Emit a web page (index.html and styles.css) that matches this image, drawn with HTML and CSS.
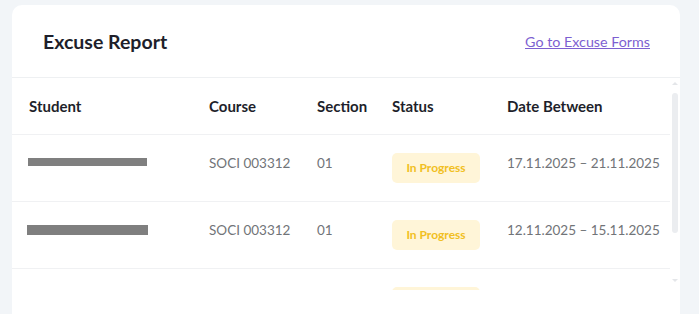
FILE: index.html
```html
<!DOCTYPE html>
<html lang="en">
<head>
  <meta charset="UTF-8">
  <meta name="viewport" content="width=device-width, initial-scale=1.0">
  <title>Excuse Report</title>
  <link rel="stylesheet" href="styles.css">
</head>
<body>
  <div class="report-card">
    <div class="report-header">
      <h2>Excuse Report</h2>
      <a href="#" class="forms-link">Go to Excuse Forms</a>
    </div>

    <div class="table-wrap">
      <div class="table-scroll">
        <table class="report-table">
          <colgroup>
            <col class="col-student">
            <col class="col-course">
            <col class="col-section">
            <col class="col-status">
            <col class="col-date">
          </colgroup>
          <thead>
            <tr>
              <th>Student</th>
              <th>Course</th>
              <th>Section</th>
              <th>Status</th>
              <th>Date Between</th>
            </tr>
          </thead>
          <tbody>
            <tr>
              <td><span class="hidden-name thin"></span></td>
              <td>SOCI 003312</td>
              <td>01</td>
              <td><span class="badge">In Progress</span></td>
              <td>17.11.2025 – 21.11.2025</td>
            </tr>
            <tr>
              <td><span class="hidden-name"></span></td>
              <td>SOCI 003312</td>
              <td>01</td>
              <td><span class="badge">In Progress</span></td>
              <td>12.11.2025 – 15.11.2025</td>
            </tr>
            <tr>
              <td></td>
              <td></td>
              <td></td>
              <td><span class="badge"></span></td>
              <td></td>
            </tr>
          </tbody>
        </table>
      </div>

      <!-- thin custom scrollbar on the right of the list -->
      <div class="scrollbar">
        <span class="scroll-arrow up"></span>
        <span class="scroll-thumb"></span>
        <span class="scroll-arrow down"></span>
      </div>
    </div>
  </div>
</body>
</html>
```

FILE: styles.css
```css
body {
  margin: 0;
  padding: 5px 19px 0 12px;
  background: #f2f5f8;
  font-family: "Lato", "Liberation Sans", sans-serif;
}

.report-card {
  background: #fff;
  border-radius: 10px 10px 0 0;
  height: 320px;
}

.report-header {
  display: flex;
  justify-content: space-between;
  align-items: center;
  height: 72px;
  padding: 0 30px 0 31px;
  border-bottom: 1px solid #eef0f2;
}

.report-header h2 {
  margin: 0;
  font-size: 19.5px;
  font-weight: 700;
  color: #1e1f2b;
}

.forms-link {
  font-size: 14.3px;
  color: #7d5fd1;
  text-decoration: underline;
}

.table-wrap {
  position: relative;
}

.table-scroll {
  height: 212px;
  overflow-y: auto;
  scrollbar-width: none;
}

.table-scroll::-webkit-scrollbar {
  display: none;
}

.scrollbar {
  position: absolute;
  top: 0;
  right: 2px;
  width: 6px;
  height: 212px;
  display: flex;
  flex-direction: column;
  align-items: center;
}

.scroll-arrow {
  width: 0;
  height: 0;
  border-left: 3px solid transparent;
  border-right: 3px solid transparent;
}

.scroll-arrow.up {
  margin-top: 4px;
  border-bottom: 3px solid #e4e6e9;
}

.scroll-arrow.down {
  margin-top: 46px;
  border-top: 3px solid #e4e6e9;
}

.scroll-thumb {
  width: 6px;
  height: 140px;
  margin-top: 8px;
  border-radius: 3px;
  background: #ebedf0;
}

.report-table {
  width: 658px;
  border-collapse: collapse;
  table-layout: fixed;
  margin-bottom: 30px;
}

.col-student { width: 180px; }
.col-course { width: 108px; }
.col-section { width: 75px; }
.col-status { width: 115px; }
.col-date { width: 180px; }

.report-table th {
  text-align: left;
  font-size: 15px;
  font-weight: 700;
  color: #1e1f2b;
  padding: 17px 0 17px 17px;
  line-height: 22px;
  border-bottom: 1px solid #f0f1f3;
}

.report-table td {
  vertical-align: top;
  font-size: 13.5px;
  color: #717478;
  padding: 18px 0 18px 17px;
  line-height: 20px;
  border-bottom: 1px solid #f0f1f3;
  white-space: nowrap;
}

.hidden-name {
  display: inline-block;
  width: 121px;
  height: 10px;
  margin-top: 5px;
  margin-left: -2px;
  background: #7f7f7f;
  vertical-align: top;
}

.hidden-name.thin {
  width: 119px;
  height: 8px;
  margin-left: -1px;
}

.badge {
  display: inline-block;
  width: 88px;
  height: 30px;
  line-height: 30px;
  text-align: center;
  vertical-align: top;
  border-radius: 5px;
  background: #fff5d8;
  color: #f1bf22;
  font-size: 12px;
  font-weight: 700;
}
```
